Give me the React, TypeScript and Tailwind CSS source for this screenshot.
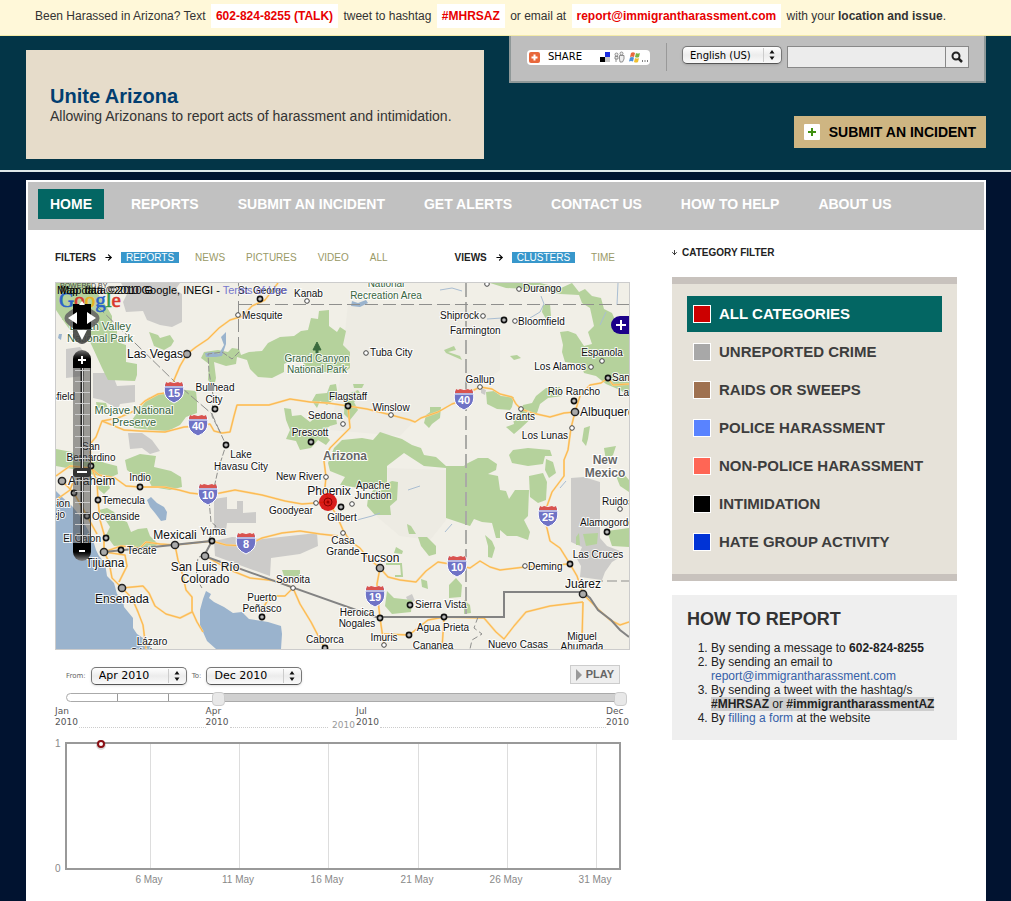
import { useState } from "react";
import { ArrowDown, ArrowRight } from "lucide-react";
import clsx from "clsx";

type Anchor = "start" | "middle" | "end";
type Label = [text: string, x: number, y: number, anchor?: Anchor, size?: number];

const NAV = [
  "HOME",
  "REPORTS",
  "SUBMIT AN INCIDENT",
  "GET ALERTS",
  "CONTACT US",
  "HOW TO HELP",
  "ABOUT US",
];

const CATEGORIES = [
  { name: "ALL CATEGORIES", color: "#cc0000" },
  { name: "UNREPORTED CRIME", color: "#a8a8a8" },
  { name: "RAIDS OR SWEEPS", color: "#9f7150" },
  { name: "POLICE HARASSMENT", color: "#5983ff" },
  { name: "NON-POLICE HARASSMENT", color: "#ff6655" },
  { name: "INTIMIDATION", color: "#000000" },
  { name: "HATE GROUP ACTIVITY", color: "#0033d6" },
];

const MONTHS = ["Jan", "Feb", "Mar", "Apr", "May", "Jun", "Jul", "Aug", "Sep", "Oct", "Nov", "Dec"];

const WATER = [
  "M56 491L62 497L72 506L80 516L88 530L93 540L96 550L99 556L105 563L107 576L114 583L117 594L123 600L124 607L133 618L133 628L137 634L146 640L152 649H56Z",
  "M200 610L203 599L206 591L211 594L209 598L214 602L224 607L233 613L242 612L249 619L268 622L281 626L282 634L281 649H216L207 641L203 632L200 625Z",
  "M147 500L151 497L157 503L164 507L167 512L166 520L161 521L155 513L150 507Z",
  "M205 353L213 352L219 354L224 345L221 337L226 332L226 344L222 356L216 357L206 357Z",
  "M352 301L358 303L366 300L368 303L360 307L351 306Z",
  "M59 334L62 334L61 340L58 338Z",
];

const GREEN = [
  "M56 283H90L98 294L108 309L112 316L112 325L117 329L117 342L126 345L126 362L137 364L137 375L135 381L108 380L102 368L92 346L88 338L70 330L60 316L56 310Z",
  "M132 420L148 398L160 394L175 389L196 391L197 401L197 413L186 417L180 425L168 431L150 430L134 428Z",
  "M149 332L158 335L160 338L170 335L174 341L171 346L164 350L154 346Z",
  "M204 352L218 350L228 352L232 348L239 349L241 355L249 352L262 351L268 343L280 337L294 336L301 331L308 330L311 318L318 319L319 311L329 310L329 326L337 332L340 327L346 331L343 345L350 352L350 368L343 373L306 371L303 362L290 361L284 364L284 372L272 378L258 377L250 369L247 360L237 357L236 364L226 366L214 362L216 378L214 387L208 380L209 364L201 358Z",
  "M125 460L140 454L156 456L154 467L171 471L181 477L182 487L170 490L152 487L148 479L136 477L127 470Z",
  "M56 449L72 452L82 460L93 458L105 463L117 466L118 474L109 478L90 474L78 470L56 466Z",
  "M99 510L107 508L114 512L119 519L127 522L131 532L138 529L147 528L150 536L158 544L152 548L138 553L128 545L114 546L106 535L110 527Z",
  "M96 477L107 480L110 488L104 494L97 488Z",
  "M64 312H72L70 320L62 320Z",
  "M96 402L106 403L108 409L97 408Z",
  "M330 385L336 384L338 396L327 405L320 401L317 408L312 401L316 394L327 393Z",
  "M284 408L291 409L292 416L301 415L310 422L320 414L336 418L337 424L330 426L322 432L330 440L326 445L318 440L311 448L300 450L296 441L286 439L290 430L286 420Z",
  "M345 395L358 390L362 396L354 402L358 410L350 420L344 414Z",
  "M426 415L430 412V407L441 407L440 418L432 424L429 428L424 423Z",
  "M373 440L380 432L392 436L402 439L412 445L421 448L424 455L436 457L446 466H464L466 464L478 458L488 458L497 464L496 470L488 474L498 476L500 490L506 491L509 499L515 490L529 490L528 516L524 520L530 532L528 540L517 536L507 536L500 530L500 538L496 538L492 523L482 522L474 519L470 526L464 524L446 518V468L424 466L404 453L387 466V485L366 489L340 485L345 477L330 471L328 463L334 448L342 440L362 438Z",
  "M374 489L392 481L398 482L397 500L390 506L391 515L375 515L367 506L368 498Z",
  "M509 455L513 450L528 448L550 450L552 456L545 456L543 464L528 466L512 463Z",
  "M529 476L543 473L547 482L546 500L538 503L530 497Z",
  "M546 459L553 462L556 473L549 478L545 470Z",
  "M490 283H540L561 288L572 283L579 292L585 289L592 296L601 298L604 309L612 313L616 322L629 332V396L620 390L606 384L596 376L584 373L581 364L565 362L562 352L563 345L560 332L568 331L576 334L584 346L592 344L588 332L594 326L590 308L582 303L579 295L560 294L544 290L506 288Z",
  "M543 305L550 304L551 316L546 319L542 312Z",
  "M486 392L494 391L501 396L514 397L512 407L510 410L497 409L487 404Z",
  "M506 427L514 424L512 413L520 413L523 405L532 403L536 396L546 388L560 387L562 396L548 398L540 404L537 413L521 428L514 434Z",
  "M584 428L590 426L588 439L586 446L582 441Z",
  "M604 448L616 446L613 455L606 461Z",
  "M616 476L622 472L629 480V492L620 486Z",
  "M444 350L454 346L456 350L448 352L460 356L462 360L446 353Z",
  "M510 356L517 355L521 358L514 360Z",
  "M353 384H364L362 388L354 388Z",
  "M407 524L411 526L416 534L409 534L408 530Z",
  "M418 537L427 537L436 546L436 554L429 556L421 546Z",
  "M396 547L403 551L402 554L394 553Z",
  "M387 591L394 598L412 600L411 612L392 614L385 606Z",
  "M421 579L427 581L428 589L422 587Z",
  "M449 585L456 578L462 585L461 597L449 598Z",
  "M464 600L470 605L471 613L464 614Z",
  "M485 535L492 541L495 548L492 558L488 557L488 546Z",
  "M576 537L579 533L580 545L576 545Z",
  "M583 534L598 533L597 544L586 546Z",
  "M607 531L629 528V547L612 546Z",
  "M282 570H300V577L284 576Z",
  "M114 605L119 603L118 608Z",
];

const GRAY = [
  "M121 283H180L175 290L182 294V322L172 327L160 325L147 320L143 311L126 312L123 302L127 294Z",
  "M66 349L80 347L84 352V376L66 378Z",
  "M93 373L112 373L117 386L135 385V402L120 404L118 409L102 400L93 398Z",
  "M128 433L142 433L152 440L160 451L150 454L142 448L130 449Z",
  "M214 499L227 497V509H237V501H243V513L256 512V523H227L226 530L214 529Z",
  "M214 541L232 537L262 539L317 533L318 546L300 554L271 558L270 576L253 570L215 556Z",
  "M571 478L584 477L600 482V538L607 546L620 551L622 556L612 562L605 572L602 580L580 577L581 566L577 559L582 547L571 542Z",
  "M406 597L412 594L415 601L409 603Z",
  "M481 388L486 390L485 395L481 393Z",
];

const ROADS = [
  "M278 283L265 300L252 306L243 316L230 320L219 328L208 339L196 347L187 354L180 366L174 380L172 392L158 394L145 401L134 411L118 418L102 421L96 437L90 444L91 466L97 482L98 500L100 520L104 534L104 552",
  "M102 421L112 425L124 430L140 431L165 432L184 427L198 426L210 424L214 431L222 433L230 432L234 416L237 405L252 405L269 405L290 399L310 402L328 403L348 406L367 409L391 415L410 420L415 422L421 418L438 412L452 404L464 400L472 391L480 387L492 389L500 394L512 397L516 404L521 409L532 413L550 417L564 413L575 412",
  "M56 476L70 466L91 468L99 475L115 478L126 486L140 487L164 487L179 490L190 493L208 495L220 493L235 490L262 495L285 501L302 504L328 502L336 514L343 530L350 541L360 548L368 558L380 568L388 577L400 580L416 582L426 571L438 562L450 564L470 568L480 561L490 567L500 570L525 567L550 565L570 564",
  "M104 552L121 546L140 548L146 542L160 544L175 545L212 541L226 545L246 546L262 538L282 533L300 531L320 534L338 536",
  "M328 502L325 487L326 477L324 461L330 448L340 438L350 428L348 406",
  "M608 378L601 383L590 385L580 396L575 412L571 428L568 450L564 460L564 476L552 492L547 506L546 524L550 541L560 548L570 564L577 576L583 594",
  "M608 378L613 385L629 384",
  "M380 568L377 584L378 600L380 618L384 645",
  "M175 545L178 560L183 576L186 590L192 597L192 611L197 622L203 632",
  "M122 588L143 586L149 593L155 606L166 614L180 618L192 612",
  "M104 552L109 562L112 578L122 588L132 598L138 612L143 625L146 649",
  "M104 552L125 555L127 566L119 582",
  "M205 556L230 570L250 578L278 581L293 588L300 604L311 622L325 649",
  "M293 588L285 596L270 596L262 610",
  "M384 634L409 635L428 620L444 617L484 618L496 632L504 639L514 626L526 612L550 606L583 602",
  "M583 602L582 640",
  "M444 617L442 649",
  "M583 594L598 609L610 620L620 625L629 622",
  "M56 500L70 490L74 480",
  "M62 481L74 493L87 516L97 534",
];

const LABELS: Label[] = [
  ["St. George", 238, 294],
  ["Kanab", 294, 297],
  ["Mesquite", 242, 319],
  ["Las Vegas", 127, 358, "start", 12],
  ["Bullhead", 215, 391, "middle"],
  ["City", 214, 403, "middle"],
  ["Flagstaff", 348, 400, "middle"],
  ["Sedona", 308, 419],
  ["Prescott", 310, 436, "middle"],
  ["Winslow", 391, 411, "middle"],
  ["Tuba City", 370, 356],
  ["Shiprock", 479, 319, "end"],
  ["Farmington", 450, 334],
  ["Bloomfield", 518, 325],
  ["Durango", 523, 292],
  ["Gallup", 480, 383, "middle"],
  ["Espanola", 602, 356, "middle"],
  ["Los Alamos", 586, 370, "end"],
  ["Santa Fe", 612, 381],
  ["Rio Rancho", 574, 395, "middle"],
  ["Albuquerque", 580, 416, "start", 12],
  ["Las Vegas", 618, 396],
  ["Grants", 520, 420, "middle"],
  ["Los Lunas", 568, 439, "end"],
  ["Lake", 241, 458, "middle"],
  ["Havasu City", 241, 470, "middle"],
  ["New River", 322, 480, "end"],
  ["Phoenix", 329, 495, "middle", 12],
  ["Goodyear", 313, 514, "end"],
  ["Gilbert", 342, 521, "middle"],
  ["Apache", 373, 489, "middle"],
  ["Junction", 373, 499, "middle"],
  ["Casa", 343, 544, "middle"],
  ["Grande", 343, 555, "middle"],
  ["Yuma", 213, 535, "middle"],
  ["Mexicali", 175, 539, "middle", 12],
  ["San Luis Río", 205, 571, "middle", 12],
  ["Colorado", 205, 583, "middle", 12],
  ["Tijuana", 105, 567, "middle", 12],
  ["Ensenada", 122, 603, "middle", 12],
  ["Tecate", 127, 554],
  ["El Cajon", 101, 542, "end"],
  ["Oceanside", 92, 520],
  ["Temecula", 102, 504],
  ["Anaheim", 68, 485, "start", 12],
  ["Indio", 140, 481, "middle"],
  ["San", 91, 450, "middle"],
  ["Bernardino", 91, 461, "middle"],
  ["Mission", 70, 507, "end"],
  ["Viejo", 65, 518, "end"],
  ["Bakersfield", 75, 400, "end"],
  ["Sonoita", 293, 583, "middle"],
  ["Puerto", 262, 601, "middle"],
  ["Peñasco", 262, 612, "middle"],
  ["Caborca", 325, 643, "middle"],
  ["Lázaro", 152, 645, "middle"],
  ["Cárdenas", 152, 656, "middle"],
  ["Heroica", 357, 616, "middle"],
  ["Nogales", 357, 627, "middle"],
  ["Imuris", 384, 641, "middle"],
  ["Sierra Vista", 415, 608],
  ["Agua Prieta", 443, 631, "middle"],
  ["Cananea", 433, 649, "middle"],
  ["Tucson", 380, 562, "middle", 12],
  ["Deming", 528, 570],
  ["Las Cruces", 598, 558, "middle"],
  ["Juárez", 583, 588, "middle", 12],
  ["Alamogordo", 580, 526],
  ["Ruidoso", 602, 505],
  ["Nuevo Casas", 518, 648, "middle"],
  ["Miguel", 582, 640, "middle"],
  ["Ahumada", 582, 650, "middle"],
];

const PARK_LABELS: Label[] = [
  ["Death Valley", 131, 330, "end", 11],
  ["National Park", 133, 342, "end", 11],
  ["Mojave National", 134, 414, "middle", 11],
  ["Preserve", 134, 426, "middle", 11],
  ["Grand Canyon", 317, 362, "middle"],
  ["National Park", 317, 373, "middle"],
  ["National", 386, 287, "middle"],
  ["Recreation Area", 386, 299, "middle"],
];

const BIG_CITIES = [
  [187, 354], [575, 412], [62, 481], [175, 545], [205, 556], [104, 552], [122, 588], [380, 568], [583, 594],
];

const CITIES = [
  [260, 299], [215, 409], [348, 406], [311, 442], [226, 445], [504, 320], [608, 378], [574, 401], [341, 507],
  [212, 541], [121, 550], [106, 538], [87, 516], [98, 500], [74, 493], [91, 466], [140, 487], [262, 617],
  [325, 648], [380, 618], [410, 605], [444, 617], [409, 635], [570, 564], [607, 532],
];

const TOWNS = [
  [307, 301], [238, 315], [343, 424], [391, 415], [366, 353], [483, 316], [515, 321], [519, 289], [487, 284],
  [480, 387], [602, 361], [591, 367], [521, 409], [572, 428], [326, 477], [316, 503], [352, 504], [343, 533],
  [293, 588], [384, 645], [525, 566], [620, 509],
];

const SHIELDS: [string, number, number][] = [
  ["15", 174, 392],
  ["40", 198, 425],
  ["10", 208, 494],
  ["8", 246, 543],
  ["40", 464, 399],
  ["25", 548, 516],
  ["10", 457, 566],
  ["19", 375, 596],
];

const TICKS: [string, number][] = [
  ["6 May", 150],
  ["11 May", 239],
  ["16 May", 328],
  ["21 May", 418],
  ["26 May", 507],
  ["31 May", 596],
];

const Pill = ({ children }: { children: string }) => (
  <strong className="mx-[2px] inline-block bg-white px-[5px] leading-6 text-[#e80000]">{children}</strong>
);

const MapLabel = ({ label, fill }: { label: Label; fill: string }) => {
  const [text, x, y, anchor = "start", size = 10] = label;
  return (
    <text
      x={x}
      y={y}
      textAnchor={anchor}
      fontSize={size}
      fill={fill}
      stroke="#fff"
      strokeWidth={2}
      strokeOpacity={0.85}
      paintOrder="stroke"
    >
      {text}
    </text>
  );
};

const Shield = ({ text, x, y }: { text: string; x: number; y: number }) => (
  <g transform={`translate(${x} ${y})`}>
    <path
      d="M-9 -9Q-6 -8 -4 -9Q0 -10 4 -9Q6 -8 9 -9Q11 0 8 5Q5 9 0 11Q-5 9 -8 5Q-11 0 -9 -9Z"
      fill="#6f73c6"
      stroke="#fff"
    />
    <path d="M-8 -10L-6 -9L-4 -10L0 -9L4 -10L6 -9L8 -10L9 -6H-9Z" fill="#d9534f" />
    <path d="M-9 -5H9" stroke="#fff" />
    <text y={5} textAnchor="middle" fontSize={11} fontWeight={700} fill="#fff">
      {text}
    </text>
  </g>
);

const MapCanvas = () => (
  <svg
    viewBox="56 283 573 366"
    className="block h-auto w-full bg-[#f1efe7] font-['Liberation_Sans',Arial,sans-serif]"
    role="img"
    aria-label="Map of Arizona"
  >
    <path d="M348 304H500V370L480 385L465 398L415 420L400 436L330 430L340 380Z" fill="#edebe3" />
    <path d="M387 468L446 470V520L430 540L400 536L375 515L390 506Z" fill="#edebe3" />
    {GRAY.map((d) => (
      <path key={d} d={d} fill="#cccbc9" />
    ))}
    {GREEN.map((d) => (
      <path key={d} d={d} fill="#b5d29c" />
    ))}
    <path d="M386 564H401L402 576H395" fill="none" stroke="#b5d29c" strokeWidth={2} />
    {WATER.map((d) => (
      <path key={d} d={d} fill="#9ab3cd" />
    ))}
    <g fill="none" stroke="#a9bdd2" strokeWidth={1}>
      <path d="M487 319L502 318M530 318L540 312L544 304L541 296M600 325L606 312M618 283L617 305M440 290L452 288L462 291" />
      <path d="M357 520L372 516L380 513M408 490L420 486M445 532L452 524M560 488L566 481" />
    </g>
    <g fill="none" stroke="#fdd38b" strokeWidth={2} strokeLinejoin="round">
      {ROADS.map((d) => (
        <path key={d} d={d} />
      ))}
    </g>
    <g fill="none" stroke="#fbb84f" strokeWidth={1} strokeLinejoin="round">
      {ROADS.map((d) => (
        <path key={d} d={d} />
      ))}
    </g>
    <g fill="none" stroke="#8f8f8d">
      <path d="M466 283V614" strokeWidth={2} strokeDasharray="14 5" stroke="#aaaaa6" />
      <path d="M239 304.5H629" strokeDasharray="13 5" />
      <path d="M238.500 283V350" strokeDasharray="13 5" />
      <path d="M97 306L176 383L212 414L220 432" strokeDasharray="10 3" />
      <path
        d="M239 352L232 359L222 352L208 354L209 372L213 395L212 416L220 432L226 445L218 470L214 488M209 500L211 522L216 526L208 541"
        strokeDasharray="6 2"
      />
      <path d="M593 581H629" strokeDasharray="10 4" />
      <path
        d="M205 556L198 557L197 568L196 578L202 588M478 617L474 628L482 634L472 640L470 649"
        strokeDasharray="6 3"
      />
      <path
        d="M104 552L212 541L204 556L376 617H504V592H583L590 598L598 610L611 620L620 630L629 637"
        strokeWidth={2}
        stroke="#838383"
      />
    </g>
    <path d="M317 342L321 350H313ZM316 350H318V353H316Z" fill="#3b6b3e" stroke="#3b6b3e" />
    {SHIELDS.map(([text, x, y]) => (
      <Shield key={`${text}-${x}`} text={text} x={x} y={y} />
    ))}
    {TOWNS.map(([x, y]) => (
      <circle key={`${x}-${y}`} cx={x} cy={y} r={2.3} fill="#fff" stroke="#444" />
    ))}
    {CITIES.map(([x, y]) => (
      <circle key={`${x}-${y}`} cx={x} cy={y} r={2.6} fill="#bbb" stroke="#111" strokeWidth={1.6} />
    ))}
    {BIG_CITIES.map(([x, y]) => (
      <circle key={`${x}-${y}`} cx={x} cy={y} r={3.6} fill="#aaa" stroke="#222" strokeWidth={1.5} />
    ))}
    {PARK_LABELS.map((label) => (
      <MapLabel key={`${label[1]}-${label[2]}`} label={label} fill="#376540" />
    ))}
    {LABELS.map((label) => (
      <MapLabel key={`${label[1]}-${label[2]}`} label={label} fill="#111" />
    ))}
    <path d="M208 385H214V391H208Z" fill="#999" />
    <g fontSize={12} fontWeight={700} fill="#666" textAnchor="middle" stroke="#fff" strokeWidth={2} paintOrder="stroke">
      <text x={345} y={460}>Arizona</text>
      <text x={605} y={464}>New</text>
      <text x={605} y={477}>Mexico</text>
    </g>
    <circle cx={328} cy={502} r={9} fill="#d40000" fillOpacity={0.88} />
    <circle cx={328} cy={502} r={4} fill="none" stroke="#8b0000" />
    <circle cx={328} cy={502} r={1.5} fill="#900" />
  </svg>
);

const MapControls = () => (
  <>
    <div className="absolute top-0 left-0 font-['Liberation_Sans',Arial,sans-serif]">
      <svg width="66" height="34" viewBox="0 0 66 34" role="img" aria-label="Powered by Google">
        <text x="4" y="5" fontSize="7" fill="#444">POWERED BY</text>
        <g fontFamily="'Liberation Serif', serif" fontSize="21" strokeWidth="0.6">
          <text x="3" y="24">
            <tspan fill="#2a63c9" stroke="#2a63c9">G</tspan>
            <tspan fill="#d8382c" stroke="#d8382c">o</tspan>
            <tspan fill="#e9b21d" stroke="#e9b21d">o</tspan>
            <tspan fill="#2a63c9" stroke="#2a63c9">g</tspan>
            <tspan fill="#2f9a48" stroke="#2f9a48">l</tspan>
            <tspan fill="#d8382c" stroke="#d8382c">e</tspan>
          </text>
        </g>
      </svg>
    </div>
    <p className="absolute top-0 left-px text-[11px] leading-[14px] whitespace-nowrap text-black">
      Map data ©2010 Google, INEGI - <a href="#terms" className="text-[#7777cc]">Terms of Use</a>
    </p>
    <p className="absolute top-0 left-1 text-[11px] leading-[14px] whitespace-nowrap text-black">Map data ©2010 G</p>
    <svg viewBox="0 0 36 44" className="absolute top-[18px] left-2 h-11 w-9" role="img" aria-label="Pan map">
      <path d="M9 3H27V28H9Z" fill="#000" />
      <path d="M9 8Q-8 17 9 27ZM27 8Q44 17 27 27Z" fill="#666" fillOpacity="0.9" />
      <path d="M9 28H27V36Q18 50 9 36Z" fill="#444" fillOpacity="0.9" />
      <path d="M4 17L13 11V23ZM32 17L23 11V23ZM18 39L13 29H23ZM15 4H21L18 0Z" fill="#fff" />
    </svg>
    <div className="absolute top-[67px] left-[17px] flex w-[18px] flex-col">
      <button
        type="button"
        aria-label="Zoom in"
        className="h-[18px] rounded-t-full bg-linear-to-b from-[#777] to-black to-60%"
      >
        <svg viewBox="0 0 18 18" className="block h-[18px] w-[18px]">
          <path d="M9 6V14M5 10H13" stroke="#fff" strokeWidth="2" />
        </svg>
      </button>
      <svg viewBox="0 0 18 175" className="block h-[175px] w-[18px]" aria-hidden="true">
        <path d="M0 0H18V175H0Z" fill="#444" fillOpacity="0.5" />
        <path d="M9 0V175" stroke="#222" strokeWidth="3" />
        <path d="M9.500 0V175" stroke="#ddd" />
        {Array.from({ length: 16 }, (_, i) => (
          <path key={i} d={`M2 ${i * 11 + 2.5}H17`} stroke="#ccc" />
        ))}
        <path d="M17.500 0V175" stroke="#444" />
        <rect x="0" y="100" width="18" height="9" rx="3" fill="#333" />
        <path d="M4 104H14" stroke="#fff" strokeWidth="2" />
      </svg>
      <button
        type="button"
        aria-label="Zoom out"
        className="h-[18px] rounded-b-full bg-linear-to-t from-[#888] to-black to-60%"
      >
        <svg viewBox="0 0 18 18" className="block h-[18px] w-[18px]">
          <path d="M6 8H12" stroke="#fff" strokeWidth="2" />
        </svg>
      </button>
    </div>
    <button
      type="button"
      aria-label="Layers"
      className="absolute top-[33px] right-0 h-[18px] w-[18px] rounded-l-full bg-[#1b0089]"
    >
      <svg viewBox="0 0 18 18" className="block h-[18px] w-[18px]">
        <path d="M10 4V14M5 9H15" stroke="#fff" strokeWidth="2" />
      </svg>
    </button>
  </>
);

type SelectProps = {
  id: string;
  label: string;
  options: string[];
  initial: string;
  hideLabel?: boolean;
};

const MacSelect = ({ id, label, options, initial, hideLabel }: SelectProps) => (
  <div className="flex items-center gap-[5px]">
    {!hideLabel && (
      <label htmlFor={id} className="font-['DejaVu_Sans',sans-serif] text-[7px] text-[#666]">
        {label}
      </label>
    )}
    <div className="relative">
      <select
        id={id}
        aria-label={hideLabel ? label : undefined}
        defaultValue={initial}
        className={clsx(
          "block h-[18px] appearance-none rounded-[5px] border border-[#777] border-b-[#555] bg-linear-to-b from-white via-[#ececec] to-[#fafafa] pl-[7px] font-['DejaVu_Sans',sans-serif] text-black shadow-sm",
          hideLabel ? "w-[100px] text-[10px]" : "w-24 text-[11px]",
        )}
      >
        {options.map((option) => (
          <option key={option}>{option}</option>
        ))}
      </select>
      <svg viewBox="0 0 18 16" className="pointer-events-none absolute top-px right-px h-4 w-[18px]" aria-hidden="true">
        <path d="M0.500 1V15" stroke="#ccc" />
        <path d="M9 3L11.500 6.500H6.500ZM9 13L11.500 9.500H6.500Z" fill="#111" />
      </svg>
    </div>
  </div>
);

const Banner = () => (
  <p className="border-b border-[#f4eba8] bg-[#fff8d9] pt-1 pr-4 pb-[7px] pl-[35px] text-[12px] leading-6 text-[#333]">
    Been Harassed in Arizona? Text <Pill>602-824-8255 (TALK)</Pill> tweet to hashtag <Pill>#MHRSAZ</Pill> or email at{" "}
    <Pill>report@immigrantharassment.com</Pill> with your <strong>location and issue</strong>.
  </p>
);

const ShareButton = () => (
  <button type="button" className="flex h-[15px] w-[123px] items-center rounded-sm bg-white pl-[2px] text-black">
    <svg viewBox="0 0 11 11" className="h-[11px] w-[11px]" aria-hidden="true">
      <rect width="11" height="11" rx="2" fill="#e8683c" />
      <path d="M5.500 2.500V8.500M2.500 5.500H8.500" stroke="#fff" strokeWidth="2" />
    </svg>
    <span className="ml-2 font-['DejaVu_Sans',sans-serif] text-[10px] leading-3">SHARE</span>
    <svg viewBox="0 0 48 12" className="mr-[2px] ml-auto h-3 w-12" aria-hidden="true">
      <path d="M0 6H5V11H0Z" fill="#000" />
      <path d="M5 1H10V6H5Z" fill="#1c2ee0" />
      <path d="M5 6H10V11H5Z" fill="#c8c8c8" />
      <g fill="#eee" stroke="#777" strokeWidth="0.8">
        <circle cx="16.500" cy="3.500" r="1.500" />
        <circle cx="21.500" cy="2.500" r="1.500" />
        <path d="M15 5.500H18V8H15ZM16 8V11M19.500 4.500H24V8L22.500 11H20L19.500 8Z" />
      </g>
      <path d="M31 2Q33 0.500 35 2L34 6Q32 5 30 6Z" fill="#e8683c" />
      <path d="M36 2Q38 3 40 2L39 6Q37 7 35 6Z" fill="#7db444" />
      <path d="M30 6.500Q32 5.500 34 6.500L33 10.500Q31 9.500 29 10.500Z" fill="#4b8fd8" />
      <path d="M35 7Q37 8 39 7L38 11Q36 12 34 11Z" fill="#f0c030" />
      <path d="M42 10H43M44.500 10H45.500M47 10H48" stroke="#000" />
    </svg>
  </button>
);

const Header = () => (
  <header className="border-b-2 border-[#dfe6e8] bg-[#033547] pr-[25px] pl-[26px]">
    <div className="flex justify-between pb-[11px]">
      <div className="mt-[14px] bg-[#e6dcca] py-[34px] pr-8 pl-6">
        <h1 className="text-[20px] leading-6 font-bold text-[#023e70]">Unite Arizona</h1>
        <p className="text-[14px] leading-[17px] text-[#333]">
          Allowing Arizonans to report acts of harassment and intimidation.
        </p>
      </div>
      <div className="flex flex-col items-end">
        <div className="flex items-start border-2 border-t-0 border-[#8f9898] bg-[#bebebe] pt-[7px] pr-[15px] pb-[10px] pl-4">
          <div className="flex h-7 items-center border-r border-[#999] pr-4">
            <ShareButton />
          </div>
          <div className="pt-[3px] pl-[15px]">
            <MacSelect
              id="language"
              label="Language"
              hideLabel
              initial="English (US)"
              options={["English (US)", "Español"]}
            />
          </div>
          <form className="flex pt-[3px] pl-[5px]" onSubmit={(e) => e.preventDefault()}>
            <input
              type="text"
              aria-label="Search"
              className="h-[22px] w-[159px] border border-[#888] bg-[#ececec] px-1 text-[12px]"
            />
            <button
              type="submit"
              aria-label="Search"
              className="-ml-px grid h-[22px] w-6 place-items-center border border-[#888] bg-[#ececec]"
            >
              <svg viewBox="0 0 12 12" className="h-3 w-3" aria-hidden="true">
                <circle cx="5" cy="5" r="3.500" fill="none" stroke="#222" strokeWidth="2" />
                <path d="M7.500 7.500L11 11" stroke="#222" strokeWidth="2.500" />
              </svg>
            </button>
          </form>
        </div>
        <a
          href="#submit"
          className="mt-[33px] flex h-8 items-center gap-[9px] bg-[#ceb582] px-[10px] text-[14px] font-bold text-black"
        >
          <svg viewBox="0 0 16 16" className="h-4 w-4" aria-hidden="true">
            <rect width="16" height="16" rx="1" fill="#fff" />
            <path d="M8 4V12M4 8H12" stroke="#3f8f10" strokeWidth="2" />
          </svg>
          SUBMIT AN INCIDENT
        </a>
      </div>
    </div>
  </header>
);

type FilterProps = {
  title: string;
  options: string[];
};

const FilterGroup = ({ title, options }: FilterProps) => {
  const [active, setActive] = useState(options[0]);
  return (
    <div className="flex items-center text-[10px] leading-[11px]">
      <strong className="text-[#222]">{title}</strong>
      <ArrowRight className="mx-2 h-[9px] w-[9px] text-black" strokeWidth={3} />
      <div className="flex gap-[11px]">
        {options.map((option) => (
          <button
            key={option}
            type="button"
            onClick={() => setActive(option)}
            className={clsx("px-[5px]", option === active ? "bg-[#3897cb] text-white" : "text-[#999966]")}
          >
            {option}
          </button>
        ))}
      </div>
    </div>
  );
};

const RANGE_CLASS =
  "pointer-events-none absolute -top-[2px] left-0 h-[14px] w-[calc(100%+9px)] appearance-none bg-transparent [&::-webkit-slider-thumb]:pointer-events-auto [&::-webkit-slider-thumb]:h-[14px] [&::-webkit-slider-thumb]:w-[13px] [&::-webkit-slider-thumb]:appearance-none [&::-webkit-slider-thumb]:rounded-[4px] [&::-webkit-slider-thumb]:border [&::-webkit-slider-thumb]:border-[#ccc] [&::-webkit-slider-thumb]:bg-[#e8e8e8]";

const TimelineSlider = () => {
  const [range, setRange] = useState([26.5, 100]);
  return (
    <div className="relative mx-[11px] mt-2 h-[9px] rounded-l-full border border-[#aaa] bg-white">
      <div
        className="absolute inset-y-0 bg-[#d0d0d0]"
        style={{ left: `${range[0]}%`, right: `${100 - range[1]}%` }}
      />
      <div className="flex h-full w-[27.5%]">
        <div className="flex-1 border-r border-[#999]" />
        <div className="flex-1 border-r border-[#999]" />
        <div className="flex-1" />
      </div>
      <input
        type="range"
        aria-label="Start month"
        step={0.5}
        value={range[0]}
        onChange={(e) => setRange([Number(e.target.value), range[1]])}
        className={RANGE_CLASS}
      />
      <input
        type="range"
        aria-label="End month"
        step={0.5}
        value={range[1]}
        onChange={(e) => setRange([range[0], Number(e.target.value)])}
        className={RANGE_CLASS}
      />
    </div>
  );
};

const MonthLabel = ({ month }: { month: string }) => (
  <span className="w-6">
    {month}
    <br />
    2010
  </span>
);

const Timeline = () => {
  const months = MONTHS.map((month) => `${month} 2010`);
  return (
    <section className="pt-[15px]">
      <div className="flex items-start justify-between pr-[10px] pl-[11px]">
        <div className="flex gap-[5px] pt-[2px]">
          <MacSelect id="from" label="From:" initial="Apr 2010" options={months} />
          <MacSelect id="to" label="To:" initial="Dec 2010" options={months} />
        </div>
        <button
          type="button"
          className="flex h-[19px] items-center gap-1 border border-[#ccc] bg-[#eee] px-[5px] text-[11px] font-bold text-[#666]"
        >
          <svg viewBox="0 0 6 12" className="h-3 w-[6px]" aria-hidden="true">
            <path d="M0 0L6 6L0 12Z" fill="#999" />
          </svg>
          PLAY
        </button>
      </div>
      <TimelineSlider />
      <div className="flex items-end pt-1 font-['DejaVu_Sans',sans-serif] text-[9px] leading-[11px] text-[#555]">
        <MonthLabel month="Jan" />
        <span className="flex-[126] border-b border-dotted border-[#ccc]" />
        <MonthLabel month="Apr" />
        <span className="flex-[98] border-b border-dotted border-[#ccc]" />
        <span className="-mb-[3px] ml-1 w-6 text-[#999]">2010</span>
        <MonthLabel month="Jul" />
        <span className="flex-[225] border-b border-dotted border-[#ccc]" />
        <MonthLabel month="Dec" />
      </div>
      <svg
        viewBox="55 733 575 155"
        className="mt-[5px] block h-auto w-full font-['Liberation_Sans',Arial,sans-serif]"
        role="img"
        aria-label="Reports per day"
      >
        {TICKS.map(([text, x]) => (
          <g key={text}>
            <path d={`M${x + 0.5} 744V868`} stroke="#ddd" />
            <text x={x - 1} y={883} textAnchor="middle" fontSize={10} fill="#888">
              {text}
            </text>
          </g>
        ))}
        <rect x={66} y={743} width={554} height={126} fill="none" stroke="#999" strokeWidth={2} />
        <text x={55} y={747} fontSize={10} fill="#888">1</text>
        <text x={55} y={872} fontSize={10} fill="#888">0</text>
        <circle cx={101} cy={745} r={3.5} fill="none" stroke="#000" strokeOpacity={0.15} strokeWidth={3} />
        <circle cx={101} cy={744} r={3} fill="#fff" stroke="#8b0f14" strokeWidth={2} />
      </svg>
    </section>
  );
};

const CategoryFilter = () => {
  const [active, setActive] = useState("ALL CATEGORIES");
  return (
    <section>
      <h2 className="flex items-center gap-1 text-[10px] leading-[11px] font-bold text-[#222]">
        <ArrowDown className="-ml-px h-[7px] w-[7px]" strokeWidth={3} />
        CATEGORY FILTER
      </h2>
      <div className="mt-[19px] flex flex-col gap-[2px] border-y-[7px] border-[#c8c2bd] bg-[#e6e2d9] px-[15px] pt-3 pb-[14px]">
        {CATEGORIES.map(({ name, color }) => (
          <button
            key={name}
            type="button"
            onClick={() => setActive(name)}
            className={clsx(
              "flex h-9 items-center gap-2 px-[6px] text-left text-[15px] font-bold whitespace-nowrap",
              name === active ? "bg-[#036663] text-white" : "text-[#3d3d3d]",
            )}
          >
            <span className="h-[18px] w-[18px] shrink-0 border border-white" style={{ backgroundColor: color }} />
            {name}
          </button>
        ))}
      </div>
    </section>
  );
};

const HowToReport = () => (
  <section className="mt-[14px] bg-[#efefef] px-[15px] pt-[14px] pb-[15px] text-[#222]">
    <h2 className="text-[18px] leading-[21px] font-bold text-[#333]">HOW TO REPORT</h2>
    <ol className="list-decimal pt-[11px] pl-6 text-[12px] leading-[14px]">
      <li>
        By sending a message to <strong>602-824-8255</strong>
      </li>
      <li>
        By sending an email to{" "}
        <a href="mailto:report@immigrantharassment.com" className="text-[#3560a8]">
          report@immigrantharassment.com
        </a>
      </li>
      <li>
        By sending a tweet with the hashtag/s
        <br />
        <span className="bg-[#cecece] whitespace-nowrap">
          <strong>#MHRSAZ</strong> or <strong>#immigrantharassmentAZ</strong>
        </span>
      </li>
      <li>
        By{" "}
        <a href="#submit" className="text-[#3560a8]">
          filling a form
        </a>{" "}
        at the website
      </li>
    </ol>
  </section>
);

const App = () => {
  return (
    <div className="flex min-h-screen flex-col bg-[#011330] font-['Liberation_Sans',Arial,sans-serif]">
      <Banner />
      <Header />
      <div className="mt-2 mr-[25px] ml-[26px] flex-1 bg-white">
        <nav className="mx-[2px] flex border-t-2 border-white bg-[#c1c1c1]">
          <ul className="flex gap-[15px] px-[10px] pt-[7px] pb-[11px]">
            {NAV.map((item, i) => (
              <li key={item}>
                <a
                  href="#"
                  className={clsx(
                    "block px-3 text-[14px] leading-[30px] font-bold whitespace-nowrap text-white",
                    i === 0 && "bg-[#036663]",
                  )}
                >
                  {item}
                </a>
              </li>
            ))}
          </ul>
        </nav>
        <main className="flex gap-[42px] px-[29px] pt-[17px]">
          <div className="min-w-0 flex-1">
            <div className="flex justify-between pt-[5px] pr-[10px] pb-[19px]">
              <FilterGroup title="FILTERS" options={["REPORTS", "NEWS", "PICTURES", "VIDEO", "ALL"]} />
              <FilterGroup title="VIEWS" options={["CLUSTERS", "TIME"]} />
            </div>
            <div className="relative overflow-hidden border border-[#ccc]">
              <MapCanvas />
              <MapControls />
            </div>
            <Timeline />
          </div>
          <aside className="w-[285px] shrink-0">
            <CategoryFilter />
            <HowToReport />
          </aside>
        </main>
      </div>
    </div>
  );
};

export default App;
